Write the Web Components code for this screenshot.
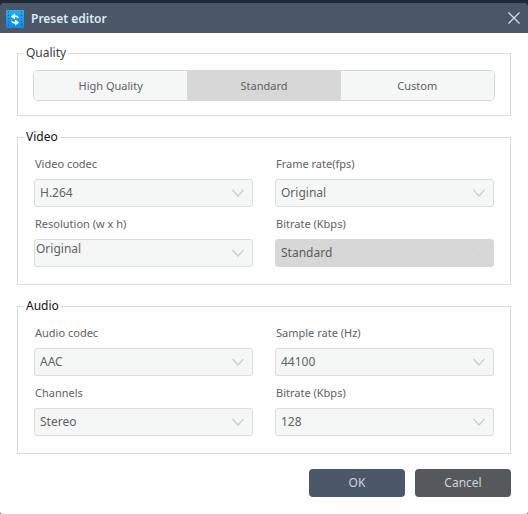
<!DOCTYPE html>
<html lang="en">
<head>
<meta charset="utf-8">
<meta name="viewport" content="width=device-width, initial-scale=1">
<title>Preset editor</title>
<style>
	body {
		margin:0;
		background:#1e2c39;
		font-family:"Noto Sans", "Open Sans", sans-serif;
		font-size:12px;
		line-height:16px;
		color:#5f6264;
	}
</style>
</head>
<body>
<pe-window heading="Preset editor">
	<pe-group heading="Quality" muted>
		<pe-segments options="High Quality|Standard|Custom" value="Standard"></pe-segments>
	</pe-group>
	<pe-group heading="Video" columns>
		<pe-field label="Video codec" options="H.264|H.265|MPEG-4"></pe-field>
		<pe-field label="Frame rate(fps)" options="Original|24|25|30|60"></pe-field>
		<pe-field label="Resolution (w x h)" options="Original|1920 x 1080|1280 x 720" top></pe-field>
		<pe-field label="Bitrate (Kbps)" options="Standard" disabled></pe-field>
	</pe-group>
	<pe-group heading="Audio" columns>
		<pe-field label="Audio codec" options="AAC|MP3"></pe-field>
		<pe-field label="Sample rate (Hz)" options="44100|48000"></pe-field>
		<pe-field label="Channels" options="Stereo|Mono"></pe-field>
		<pe-field label="Bitrate (Kbps)" options="128|192|256|320"></pe-field>
	</pe-group>
	<pe-button slot="actions" primary>OK</pe-button>
	<pe-button slot="actions">Cancel</pe-button>
</pe-window>

<script>
class PeElement extends HTMLElement {
	connectedCallback() {
		if (this.shadowRoot) {
			return;
		}

		const template = document.createElement('template');
		template.innerHTML = this.template;
		this.attachShadow({mode: 'open'}).appendChild(template.content.cloneNode(true));
		this.ready();
	}

	ready() {}

	get options() {
		return this.getAttribute('options').split('|');
	}
}

customElements.define('pe-window', class extends PeElement {
	ready() {
		this.shadowRoot.querySelector('.close').addEventListener('click', () => {
			this.dispatchEvent(new CustomEvent('pe-window:close'));
		});
	}

	get template() {
		return `
		<style>
		:host {
			display:flex;
			flex-direction:column;
			box-sizing:border-box;
			min-height:100vh;
			padding-top:3px;
		}
		header {
			display:flex;
			align-items:center;
			height:30px;
			padding:0 7px 0 6px;
			background:#4b5767;
			border-radius:4px 4px 0 0;
		}
		.logo {
			display:block;
			margin-top:2px;
		}
		h1 {
			flex:1;
			margin:2px 0 0 7px;
			font-size:12px;
			font-weight:600;
			color:#dcecf6;
		}
		.close {
			display:block;
			padding:0;
			border:0;
			background:none;
			color:#d5dee8;
		}
		.close svg {
			display:block;
		}
		main {
			flex:1;
			padding:12px 17px 17px;
			background:#fefefe;
			border-radius:0 0 2px 2px;
		}
		footer {
			display:flex;
			justify-content:flex-end;
			gap:10px;
			margin-top:15px;
		}
		</style>
		<header>
			<svg class="logo" width="18" height="18" viewBox="0 0 18 18" aria-hidden="true">
				<defs>
					<linearGradient id="film" x1="0" y1="0" x2="0" y2="1">
						<stop offset="0" stop-color="#27aef0"/>
						<stop offset="1" stop-color="#1287df"/>
					</linearGradient>
				</defs>
				<rect width="18" height="18" rx="1" fill="url(#film)"/>
				<path d="M2.5 1.5v16M15.500 1.5v16" stroke="#0f66ad" stroke-width="1.2" stroke-dasharray="1.2 2"/>
				<path d="M4.800 6.500L9 3.200v2c2.300.2 3.700 1.300 4 3.300-1.200-.9-2.400-1.200-4-1.200v2.200z" fill="#e8f8ff"/>
				<path d="M13.200 12.500L9 15.800v-2c-2.300-.2-3.700-1.300-4-3.300 1.200.9 2.400 1.200 4 1.200V9.500z" fill="#e8f8ff"/>
				<path d="M8 9.500h2" stroke="#1b9ae8" stroke-width="1.200"/>
			</svg>
			<h1>${this.getAttribute('heading')}</h1>
			<button class="close" type="button" aria-label="Close">
				<svg width="14" height="14" viewBox="0 0 14 14" fill="none" stroke="currentColor" stroke-width="1.2">
					<path d="M1.5 1.5l11 11M12.5 1.5l-11 11"/>
				</svg>
			</button>
		</header>
		<main>
			<slot></slot>
			<footer><slot name="actions"></slot></footer>
		</main>`;
	}
});

customElements.define('pe-group', class extends PeElement {
	get template() {
		return `
		<style>
		:host {
			display:block;
			margin-bottom:13px;
		}
		:host(:last-of-type) {
			margin-bottom:0;
		}
		fieldset {
			min-width:0;
			margin:0;
			padding:0;
			border:1px solid #d9dbdc;
		}
		legend {
			margin-left:6px;
			padding:0 2px;
			color:#111;
		}
		:host([muted]) legend {
			color:#3c3f41;
		}
		.content {
			padding:9px 15px 14px;
		}
		:host([columns]) .content {
			display:grid;
			grid-template-columns:1fr 1fr;
			gap:9px 22px;
			padding:11px 16px 17px;
		}
		</style>
		<fieldset>
			<legend>${this.getAttribute('heading')}</legend>
			<div class="content"><slot></slot></div>
		</fieldset>`;
	}
});

customElements.define('pe-segments', class extends PeElement {
	ready() {
		const buttons = this.shadowRoot.querySelectorAll('button');
		buttons.forEach(button => button.addEventListener('click', () => {
			buttons.forEach(other => other.setAttribute('aria-pressed', other === button));
		}));
	}

	get template() {
		return `
		<style>
		:host {
			display:grid;
			grid-template-columns:repeat(3, 1fr);
			box-sizing:border-box;
			height:31px;
			border:1px solid #d4d7d7;
			border-radius:5px;
			overflow:hidden;
		}
		button {
			padding:0;
			border:0;
			background:#f5f7f7;
			color:inherit;
			font:inherit;
			font-size:11px;
		}
		button[aria-pressed="true"] {
			background:#d7d7d7;
		}
		</style>
		${this.options.map(option => `
			<button type="button" aria-pressed="${option === this.getAttribute('value')}">${option}</button>
		`).join('')}`;
	}
});

customElements.define('pe-field', class extends PeElement {
	get template() {
		return `
		<style>
		:host {
			display:block;
			min-width:0;
		}
		label {
			display:block;
			margin-bottom:7px;
			padding-left:1px;
			font-size:11px;
		}
		.box {
			display:grid;
			align-items:center;
		}
		select, svg {
			grid-area:1 / 1;
		}
		select {
			appearance:none;
			box-sizing:border-box;
			width:100%;
			height:28px;
			margin:0;
			padding:0 28px 0 5px;
			border:1px solid #dadddd;
			border-radius:3px;
			background:#f5f7f7;
			color:inherit;
			font:inherit;
			opacity:1;
		}
		:host([top]) select {
			padding:0 28px 8px 1px;
		}
		select:disabled {
			border-color:#d7d7d7;
			background:#d7d7d7;
			color:#5a5c5e;
		}
		svg {
			justify-self:end;
			margin-right:8px;
			color:#cdcfcf;
			pointer-events:none;
		}
		:host([disabled]) svg {
			color:#d3d4d4;
		}
		</style>
		<label for="value">${this.getAttribute('label')}</label>
		<div class="box">
			<select id="value" ${this.hasAttribute('disabled') ? 'disabled' : ''}>
				${this.options.map(option => `<option>${option}</option>`).join('')}
			</select>
			<svg width="14" height="8" viewBox="0 0 14 8" fill="none" stroke="currentColor" stroke-width="1.5" aria-hidden="true">
				<path d="M1.500 1l5.500 6 5.500-6"/>
			</svg>
		</div>`;
	}
});

customElements.define('pe-button', class extends PeElement {
	get template() {
		return `
		<style>
		:host {
			display:block;
		}
		button {
			display:block;
			min-width:96px;
			height:28px;
			padding:0 12px;
			border:0;
			border-radius:4px;
			background:#56595b;
			color:#d0d3d6;
			font:inherit;
		}
		:host([primary]) button {
			background:#4a586a;
		}
		</style>
		<button type="button"><slot></slot></button>`;
	}
});
</script>
</body>
</html>
